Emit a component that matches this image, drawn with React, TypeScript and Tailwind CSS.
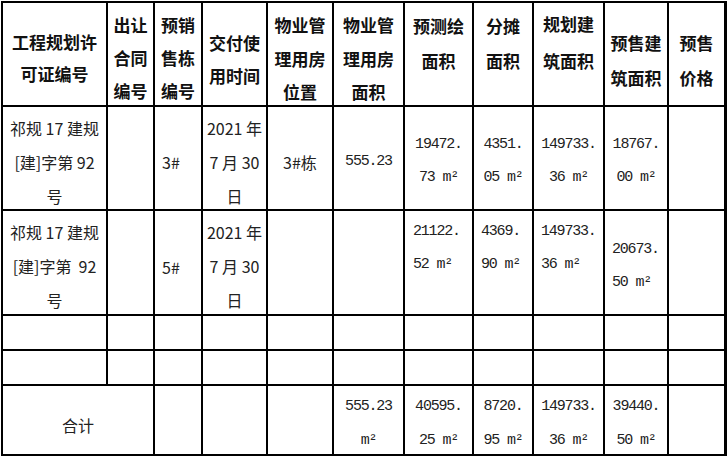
import React from "react";

type CellProps = { lines?: React.ReactNode[]; className?: string };

const Cell = ({ lines = [], className = "" }: CellProps) => (
  <div className={`bg-white flex flex-col ${className}`}>
    {lines.map((line, i) => (
      <div key={i} className="whitespace-pre">
        {line}
      </div>
    ))}
  </div>
);

// header cells: bold, centred horizontally
const head = "items-center font-bold text-[17px] text-[#111]";
// body text (chinese + digits)
const body = "items-center text-[16px] leading-[34px] text-[#222]";
// numeric area cells, SimSun-ish mono digits
const num = "font-['Liberation_Mono','Noto_Sans_CJK_SC',monospace] text-[15px] tracking-[-1.2px] text-[#222] leading-[33px]";

export default function App() {
  const empty = (n: number, key: string) =>
    Array.from({ length: n }).map((_, i) => <Cell key={`${key}-${i}`} />);

  return (
    <div className="w-[728px] h-[456px] overflow-hidden bg-white pl-px pt-px font-['Noto_Sans_CJK_SC',sans-serif]">
      <div className="inline-grid grid-cols-[103px_45px_46px_63px_64px_69px_67px_58px_69px_62px_55px] grid-rows-[102px_102px_103px_33px_33px_68px] gap-[2px] bg-black p-[2px] pr-[3px]">
        {/* header */}
        <Cell className={`${head} leading-[32px] pt-[23px]`} lines={["工程规划许", "可证编号"]} />
        <Cell className={`${head} leading-[33px] pt-[5px]`} lines={["出让", "合同", "编号"]} />
        <Cell className={`${head} leading-[33px] pt-[5px]`} lines={["预销", "售栋", "编号"]} />
        <Cell className={`${head} leading-[33px] pt-[23px]`} lines={["交付使", "用时间"]} />
        <Cell className={`${head} leading-[33.5px] pt-[5px]`} lines={["物业管", "理用房", "位置"]} />
        <Cell className={`${head} leading-[33.5px] pt-[5px]`} lines={["物业管", "理用房", "面积"]} />
        <Cell className={`${head} leading-[35px] pt-[5px]`} lines={["预测绘", "面积"]} />
        <Cell className={`${head} leading-[35px] pt-[5px]`} lines={["分摊", "面积"]} />
        <Cell className={`${head} leading-[37px] pt-[2px]`} lines={["规划建", "筑面积"]} />
        <Cell className={`${head} leading-[35px] pt-[22px]`} lines={["预售建", "筑面积"]} />
        <Cell className={`${head} leading-[35px] pt-[22px]`} lines={["预售", "价格"]} />

        {/* row 1 */}
        <Cell className={`${body} pt-[4px]`} lines={["祁规 17 建规", "[建]字第 92", "号"]} />
        <Cell />
        <Cell className={`${body} items-start pl-[7px] pt-[38px]`} lines={["3#"]} />
        <Cell className={`${body} pt-[4px]`} lines={["2021 年", "7 月 30", "日"]} />
        <Cell className={`${body} pt-[38px]`} lines={["3#栋"]} />
        <Cell className={`${num} items-center pt-[38px]`} lines={["555.23"]} />
        <Cell className={`${num} items-center pt-[21px]`} lines={["19472.", "73 m²"]} />
        <Cell className={`${num} items-center pt-[21px]`} lines={["4351.", "05 m²"]} />
        <Cell className={`${num} items-center pt-[21px]`} lines={["149733.", "36 m²"]} />
        <Cell className={`${num} items-center pt-[21px]`} lines={["18767.", "00 m²"]} />
        <Cell />

        {/* row 2 */}
        <Cell className={`${body} pt-[4px]`} lines={["祁规 17 建规", "[建]字第  92", "号"]} />
        <Cell />
        <Cell className={`${body} items-start pl-[7px] pt-[39px]`} lines={["5#"]} />
        <Cell className={`${body} pt-[4px]`} lines={["2021 年", "7 月 30", "日"]} />
        <Cell />
        <Cell />
        <Cell className={`${num} items-start pl-[8px] pt-[4px]`} lines={["21122.", "52 m²"]} />
        <Cell className={`${num} items-start pl-[7px] pt-[4px]`} lines={["4369.", "90 m²"]} />
        <Cell className={`${num} items-start pl-[7px] pt-[4px]`} lines={["149733.", "36 m²"]} />
        <Cell className={`${num} items-start pl-[7px] pt-[22px]`} lines={["20673.", "50 m²"]} />
        <Cell />

        {/* blank rows */}
        {empty(11, "r3")}
        {empty(11, "r4")}

        {/* total */}
        <Cell className={`${body} col-span-2 pt-[22px]`} lines={["合计"]} />
        <Cell />
        <Cell />
        <Cell />
        <Cell className={`${num} items-center leading-[34px] pt-[4px]`} lines={["555.23", "m²"]} />
        <Cell className={`${num} items-center leading-[34px] pt-[4px]`} lines={["40595.", "25 m²"]} />
        <Cell className={`${num} items-center leading-[34px] pt-[4px]`} lines={["8720.", "95 m²"]} />
        <Cell className={`${num} items-center leading-[34px] pt-[4px]`} lines={["149733.", "36 m²"]} />
        <Cell className={`${num} items-center leading-[34px] pt-[4px]`} lines={["39440.", "50 m²"]} />
        <Cell />
      </div>
    </div>
  );
}
